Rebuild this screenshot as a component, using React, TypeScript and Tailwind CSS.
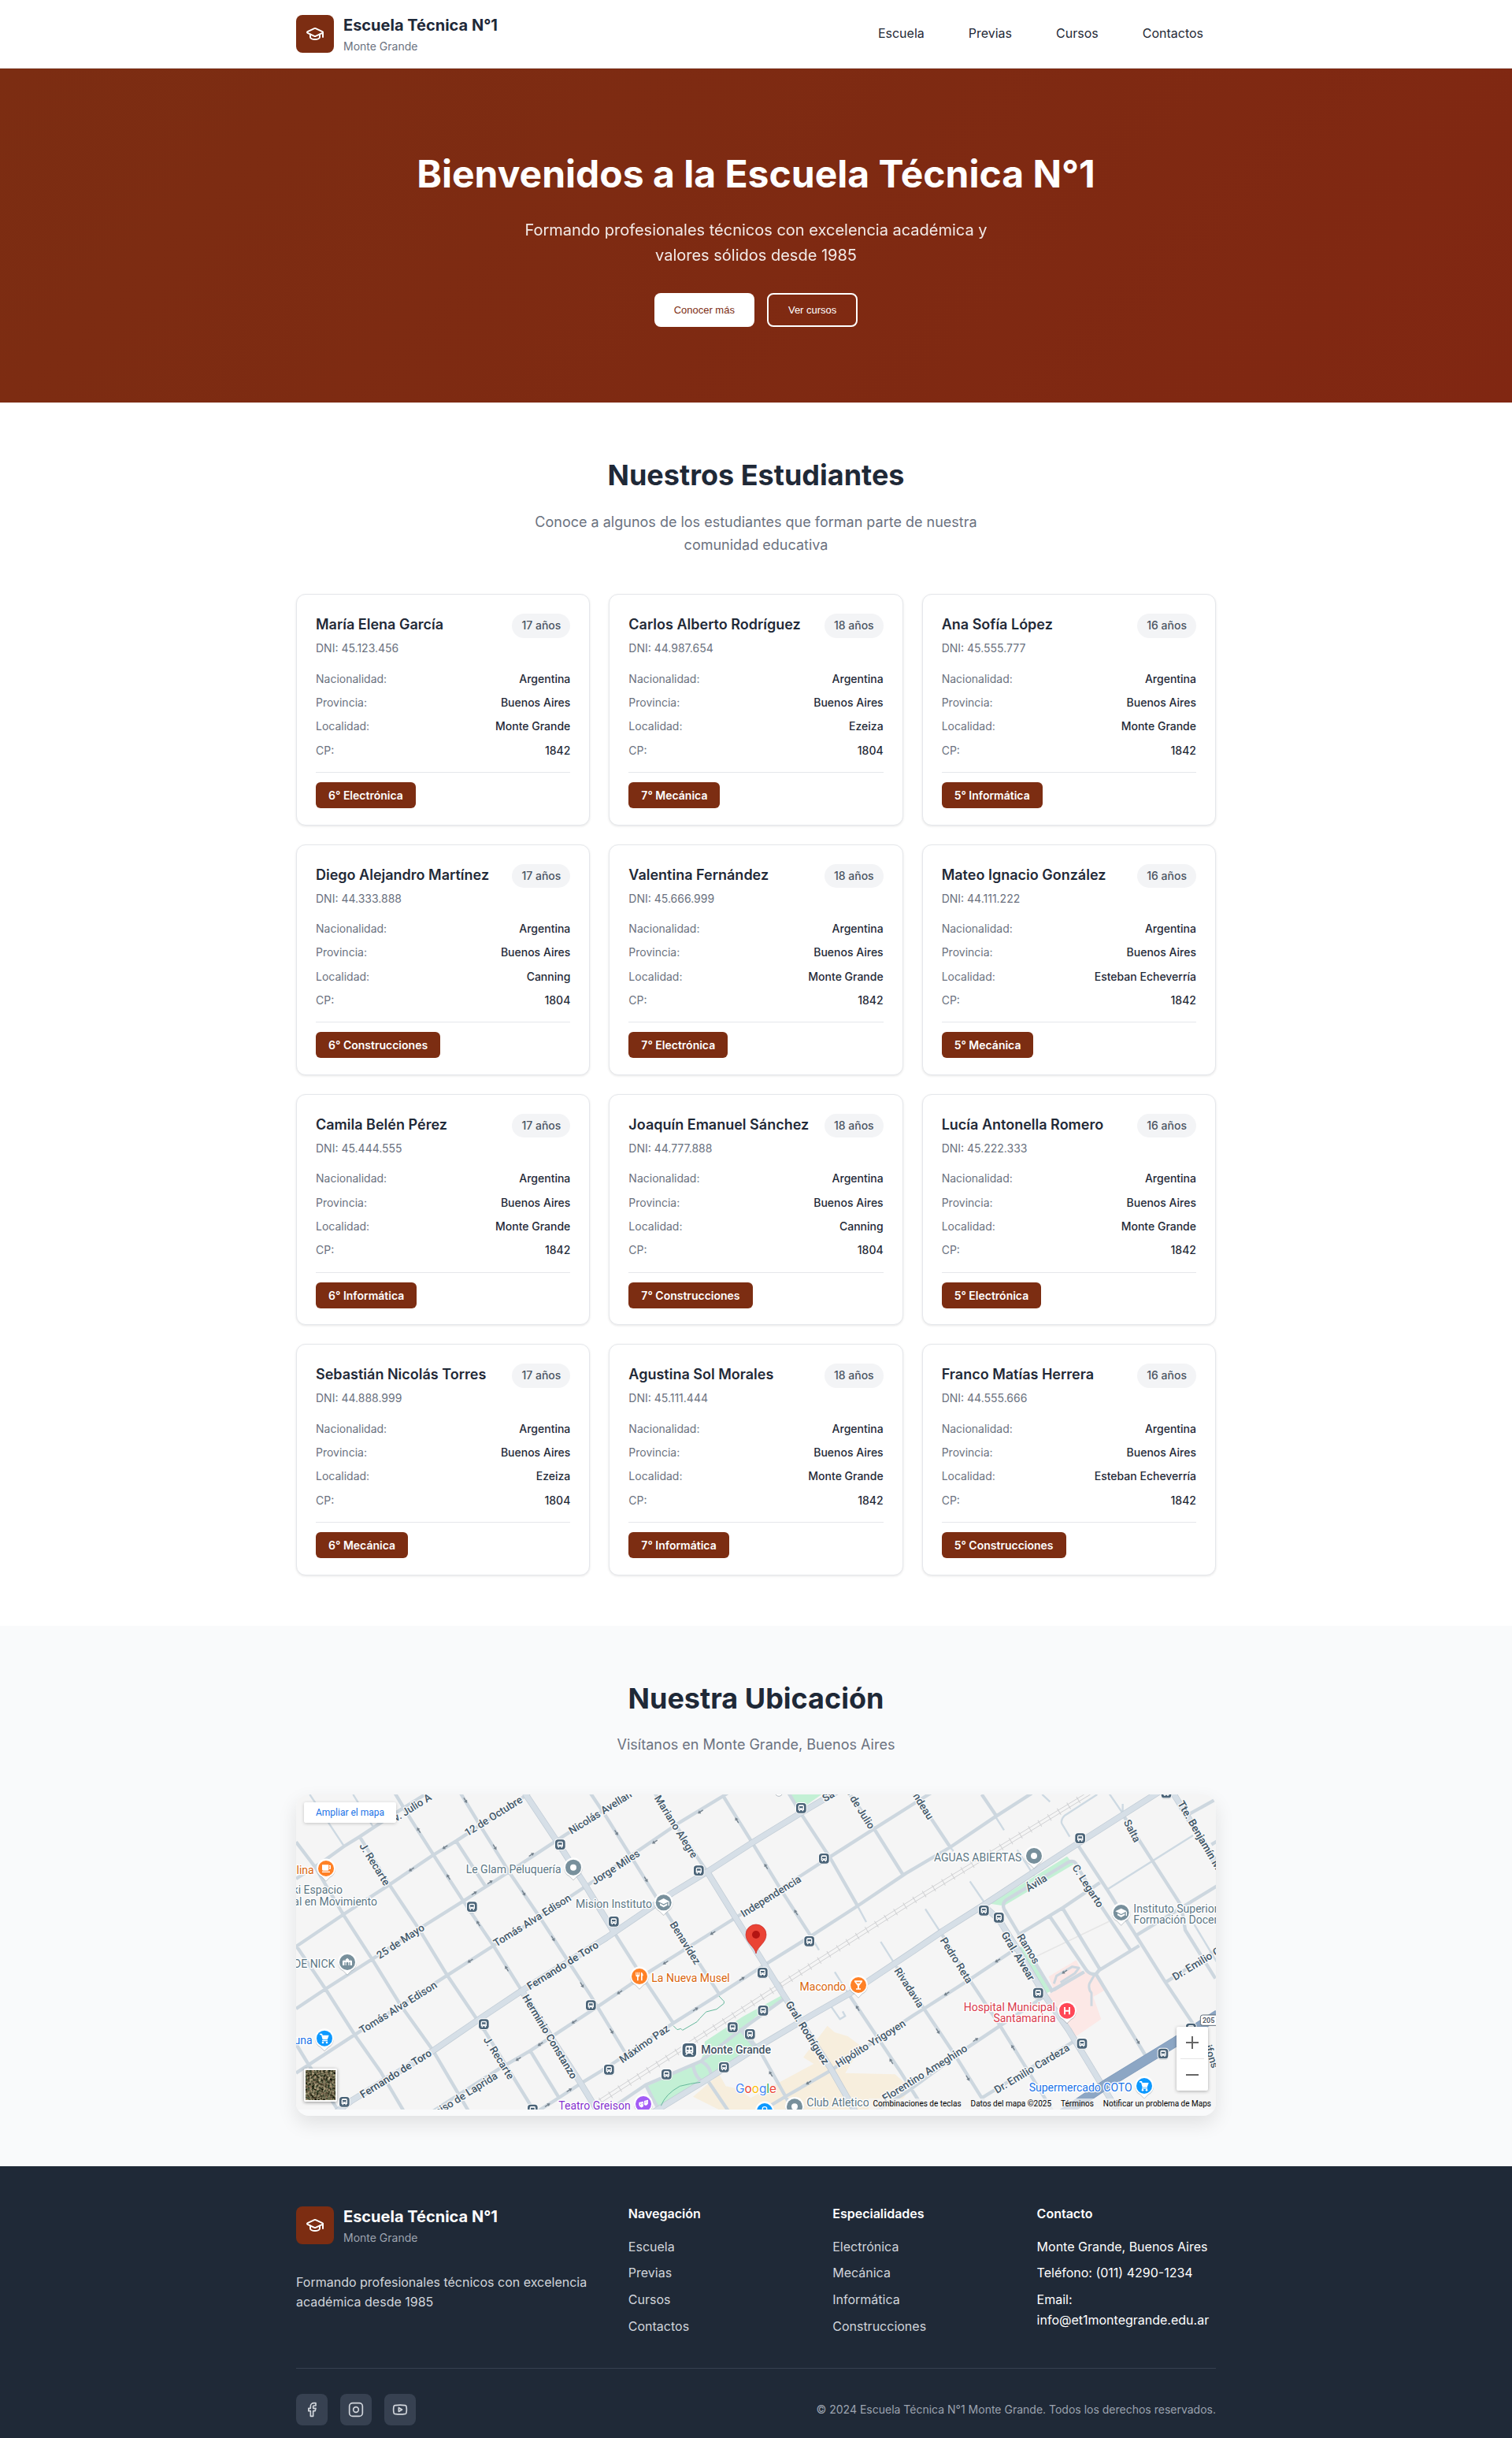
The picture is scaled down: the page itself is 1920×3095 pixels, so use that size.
import React from "react";
import { Facebook, GraduationCap, Youtube } from "lucide-react";

const NAV = ["Escuela", "Previas", "Cursos", "Contactos"];
const SPECIALTIES = ["Electrónica", "Mecánica", "Informática", "Construcciones"];

type Student = {
  name: string;
  dni: string;
  age: number;
  town: string;
  zip: string;
  course: string;
};

const STUDENTS: Student[] = [
  { name: "María Elena García", dni: "45.123.456", age: 17, town: "Monte Grande", zip: "1842", course: "6° Electrónica" },
  { name: "Carlos Alberto Rodríguez", dni: "44.987.654", age: 18, town: "Ezeiza", zip: "1804", course: "7° Mecánica" },
  { name: "Ana Sofía López", dni: "45.555.777", age: 16, town: "Monte Grande", zip: "1842", course: "5° Informática" },
  { name: "Diego Alejandro Martínez", dni: "44.333.888", age: 17, town: "Canning", zip: "1804", course: "6° Construcciones" },
  { name: "Valentina Fernández", dni: "45.666.999", age: 18, town: "Monte Grande", zip: "1842", course: "7° Electrónica" },
  { name: "Mateo Ignacio González", dni: "44.111.222", age: 16, town: "Esteban Echeverría", zip: "1842", course: "5° Mecánica" },
  { name: "Camila Belén Pérez", dni: "45.444.555", age: 17, town: "Monte Grande", zip: "1842", course: "6° Informática" },
  { name: "Joaquín Emanuel Sánchez", dni: "44.777.888", age: 18, town: "Canning", zip: "1804", course: "7° Construcciones" },
  { name: "Lucía Antonella Romero", dni: "45.222.333", age: 16, town: "Monte Grande", zip: "1842", course: "5° Electrónica" },
  { name: "Sebastián Nicolás Torres", dni: "44.888.999", age: 17, town: "Ezeiza", zip: "1804", course: "6° Mecánica" },
  { name: "Agustina Sol Morales", dni: "45.111.444", age: 18, town: "Monte Grande", zip: "1842", course: "7° Informática" },
  { name: "Franco Matías Herrera", dni: "44.555.666", age: 16, town: "Esteban Echeverría", zip: "1842", course: "5° Construcciones" },
];

function Brand({ dark = false }: { dark?: boolean }) {
  return (
    <div className="flex items-center gap-3">
      <div className="flex size-12 shrink-0 items-center justify-center rounded-lg bg-[#7c2d12] text-white">
        <GraduationCap size={24} />
      </div>
      <div>
        <p className={dark ? "text-[20px] font-bold text-white" : "text-[20px] font-bold text-gray-800"}>
          Escuela Técnica N°1
        </p>
        <p className={dark ? "text-[14px] text-[#9ca3af]" : "text-[14px] text-[#6b7280]"}>Monte Grande</p>
      </div>
    </div>
  );
}

function StudentCard({ s }: { s: Student }) {
  const rows = [
    ["Nacionalidad:", "Argentina"],
    ["Provincia:", "Buenos Aires"],
    ["Localidad:", s.town],
    ["CP:", s.zip],
  ];
  return (
    <article className="rounded-xl border border-[#e5e7eb] bg-white p-6 shadow-[0_1px_3px_rgba(0,0,0,0.1)]">
      <div className="mb-4 flex items-start justify-between">
        <div>
          <h3 className="mb-1 text-[18px] font-semibold text-[#1f2937]">{s.name}</h3>
          <p className="text-[14px] text-[#6b7280]">DNI: {s.dni}</p>
        </div>
        <span className="shrink-0 rounded-full bg-[#f3f4f6] px-3 py-1 text-[14px] font-medium text-[#4b5563]">
          {s.age} años
        </span>
      </div>
      <dl className="mb-4 flex flex-col gap-2 text-[14px]">
        {rows.map(([k, v]) => (
          <div key={k} className="flex justify-between">
            <dt className="text-[#6b7280]">{k}</dt>
            <dd className="font-medium text-[#1f2937]">{v}</dd>
          </div>
        ))}
      </dl>
      <div className="border-t border-[#e5e7eb] pt-4">
        <span className="rounded-md bg-[#7c2d12] px-4 py-2 text-[14px] font-semibold text-white">{s.course}</span>
      </div>
    </article>
  );
}

/* ---------- Map drawing: three drawing units per screen pixel ---------- */

const MINOR = [
  "M18 345 120 280 200 222 260 185 420 80 540 5",
  "M18 603 200 480 370 370 540 255 630 200 890 30 930 5",
  "M18 840 130 765 310 650 480 540 655 430 835 315 1010 200 1180 90 1330 -8",
  "M18 1085 240 940 420 825 595 712 770 600 945 490 1120 375 1290 260 1480 130 1645 30 1690 0",
  "M540 1230 790 1070 910 1000 1170 830 1370 695 1690 495 2055 260 2220 155 2370 60 2450 10",
  "M900 1255 1010 1185 1110 1120 1200 1065 1455 895 1630 785 1800 675 1985 560 2155 450 2340 325 2510 225 2680 110 2820 20",
  "M1230 1212 1350 1130 1560 1040 1700 930 1880 800",
  "M1790 1230 1890 1170 2055 1075 2370 865 2410 840 2590 725 2770 605",
  "M2775 555 2940 455 3080 360",
  "M2180 1260 2340 1160 2580 985 2700 905 2880 785",
  "M2890 775 3020 700M3075 695 3230 600M3220 560 3530 370",
  "M2630 1180 2980 965M3330 740 3530 612M3400 110 3530 38M3505 215 3530 200",
  "M18 205 90 300 200 485 310 655 415 825 540 1000 675 1230",
  "M18 600 130 765 245 945 340 1080 428 1230",
  "M18 975 70 1060 180 1230",
  "M260 185 375 370 485 535 595 715 710 885 740 930 925 1230",
  "M395 20 440 95 545 260 655 430 770 600 880 775",
  "M645 20 730 160 830 320 945 490 1055 660 1140 790 1270 1005",
  "M630 205 740 375M910 1000 1020 1180",
  "M1230 550 1325 700 1455 895",
  "M1140 20 1200 110 1390 415 1510 600 1630 785",
  "M1385 20 1470 150 1585 320",
  "M1645 30 1760 215 1870 395 1980 565",
  "M1895 20 1940 95 2055 270 2155 445",
  "M2125 20 2220 155 2330 330M2370 24 2440 120 2510 225M2630 24 2685 105",
  "M2305 680 2410 840 2530 1020 2630 1180 2660 1230",
  "M2120 780 2220 930 2320 1080 2405 1215",
  "M2480 560 2590 740 2700 905 2870 1180 2900 1230",
  "M2780 570 2715 460Q2705 435 2730 422L2960 282Q2985 270 2995 300L3085 450 3195 615",
  "M2770 560 2900 775",
  "M2995 215 3110 390 3220 565 3330 740 3440 905",
  "M2890 490 3030 695Q3045 712 3065 708L3255 1020M2940 460 3080 690 3065 708",
  "M3170 105 3250 230 3385 440Q3400 490 3405 540L3520 725",
  "M1720 920 1790 1010 1880 1170 1912 1230M1590 1120 1665 1230",
];

const THIN = [
  "M70 24 200 220M235 24 310 145",
  "M1980 565 2010 617M2155 445 2190 510M2245 585 2305 680M2070 700 2120 780",
  "M2055 830 2090 880 2110 868 2100 850M2415 460 2480 560M2585 355 2650 450M2680 105 2715 160M2860 24 2890 52M2510 225 2522 240M2765 235 2830 335",
  "M3110 385 3435 180M3440 520 3530 670M3115 20 3170 100M2965 185 2935 135Q2930 120 2945 105L3070 24M3167 60V100",
];

const MAJOR = [
  "M170 1235 230 1190 540 1000 730 870 880 770 1200 570 1450 400 1590 315 1760 205 1940 95 2050 30 2100 0",
  "M880 775 990 950 1100 1120 1170 1235",
  "M890 20 1010 200 1120 370 1230 550",
  "M1585 320 1690 490 1870 780 2050 1060 2150 1235",
  "M1370 1240 1590 1105 1770 990 1990 860 2130 780 2370 620 2480 545 2630 450 2820 325 2990 215 3170 100 3320 5",
  "M2645 455 2695 500 2770 620 2870 790 2960 920 3130 1200 3145 1230",
  "M3360 20 3440 150 3530 300",
];

const PALE = [
  "M1350 1130 1375 1180 1400 1225M1530 1055Q1540 1110 1575 1120M1560 1040Q1600 1060 1600 1105M1715 925 1765 985",
];

const ARROWS: [number, number, number][] = [
  [663, 47, 58], [485, 160, -122], [775, 225, 58], [585, 225, 147], [457, 310, 147], [598, 338, -122], [915, 253, -33],
  [757, 358, -33], [697, 400, -33], [885, 400, 58], [712, 515, -122], [997, 573, 58], [681, 658, 147], [820, 687, -122],
  [1107, 750, 58], [1077, 890, 147], [948, 975, 147], [864, 1032, 147], [1059, 1150, -33], [976, 1207, -33],
  [1238, 170, 58], [1558, 90, 147], [1384, 205, 147], [1351, 348, 58], [1697, 122, -122], [1808, 298, -122],
  [1605, 552, 147], [1425, 665, 147], [1922, 473, -122], [1250, 778, 147], [1717, 726, -33], [1540, 842, -33],
  [1220, 926, 58], [2157, 838, -122], [2285, 1040, -122], [1826, 1088, -122], [1970, 1122, 147], [2690, 657, 147],
  [2496, 783, 147], [2463, 926, 58], [2607, 958, -33], [2749, 988, -122], [2577, 1105, 58], [3225, 965, 58], [2945, 700, 147],
];

const STOPS: [number, number][] = [
  [1024, 215], [688, 452], [1141, 827], [733, 899], [202, 1195], [919, 1224], [1552, 314], [1942, 76], [2029, 268],
  [1973, 583], [1228, 508], [1795, 703], [1797, 847], [1681, 911], [1747, 937], [1648, 1063], [1429, 1090], [1210, 1072],
  [3333, 18], [3005, 191], [2638, 466], [2695, 493], [2845, 780], [3012, 973], [3321, 1011], [3427, 915],
];

type Label = { t: string; x: number; y: number; a: number; anchor?: "start" | "end"; bold?: boolean };

const STREETS: Label[] = [
  { t: "v. Julio A", x: 530, y: 31, a: -32, anchor: "end" },
  { t: "12 de Octubre", x: 770, y: 107, a: -32 },
  { t: "J. Recarte", x: 317, y: 290, a: 58 },
  { t: "25 de Mayo", x: 416, y: 584, a: -33 },
  { t: "Tomás Alva Edison", x: 918, y: 504, a: -32 },
  { t: "Tomás Alva Edison", x: 407, y: 836, a: -32 },
  { t: "Fernando de Toro", x: 1034, y: 676, a: -32, bold: true },
  { t: "Fernando de Toro", x: 398, y: 1088, a: -32, bold: true },
  { t: "Herminio Constanzo", x: 984, y: 947, a: 59, bold: true },
  { t: "J. Recarte", x: 790, y: 1028, a: 58 },
  { t: "ciso de Laprida", x: 782, y: 1092, a: -32, anchor: "end" },
  { t: "Nicolás Avellan", x: 1060, y: 166, a: -32, anchor: "start" },
  { t: "Jorge Miles", x: 1235, y: 302, a: -33 },
  { t: "Mariano Alegre", x: 1465, y: 147, a: 58 },
  { t: "Independencia", x: 1827, y: 412, a: -32 },
  { t: "Benavídez", x: 1500, y: 590, a: 58 },
  { t: "Máximo Paz", x: 1345, y: 974, a: -35 },
  { t: "Gral. Rodríguez", x: 1965, y: 932, a: 58, bold: true },
  { t: "Rivadavia", x: 2353, y: 760, a: 57 },
  { t: "Hipólito Yrigoyen", x: 2207, y: 973, a: -32 },
  { t: "Florentino Ameghino", x: 2413, y: 1086, a: -32 },
  { t: "Sa", x: 2026, y: 42, a: -30, anchor: "start", bold: true },
  { t: "o de Julio", x: 2212, y: 152, a: 58, anchor: "end" },
  { t: "ndeau", x: 2436, y: 116, a: 58, anchor: "end" },
  { t: "Salta", x: 3202, y: 163, a: 62 },
  { t: "Tte. Benjamín M", x: 3386, y: 52, a: 60, anchor: "start", bold: true },
  { t: "Ávila", x: 2838, y: 362, a: -32 },
  { t: "C. Legarto", x: 3034, y: 373, a: 57 },
  { t: "Pedro Reta", x: 2533, y: 656, a: 58 },
  { t: "Ramos", x: 2807, y: 612, a: 58 },
  { t: "Gral. Alvear", x: 2768, y: 640, a: 59, bold: true },
  { t: "Dr. Emilio Cardeza", x: 2821, y: 1069, a: -31 },
  { t: "Dr. Emilio C", x: 3360, y: 722, a: -31, anchor: "start" },
  { t: "ifons", x: 3505, y: 1022, a: 72 },
];

type Poi = { t: string; x: number; y: number; c: string; anchor?: "start" | "end" };
const SLATE = "#5c7785";
const ORANGE = "#d9660d";

const POIS: Poi[] = [
  { t: "lina", x: 86, y: 313, c: ORANGE, anchor: "end" },
  { t: "ki Espacio", x: 195, y: 388, c: SLATE, anchor: "end" },
  { t: "al en Movimiento", x: 327, y: 431, c: SLATE, anchor: "end" },
  { t: "Le Glam Peluquería", x: 1028, y: 310, c: SLATE, anchor: "end" },
  { t: "Mision Instituto", x: 1374, y: 442, c: SLATE, anchor: "end" },
  { t: "DE NICK", x: 166, y: 670, c: SLATE, anchor: "end" },
  { t: "una", x: 80, y: 961, c: "#1a73e8", anchor: "end" },
  { t: "Teatro Greison", x: 1018, y: 1210, c: "#8430ce" },
  { t: "La Nueva Musel", x: 1372, y: 724, c: ORANGE },
  { t: "Macondo", x: 2113, y: 757, c: ORANGE, anchor: "end" },
  { t: "Club Atletico", x: 1963, y: 1198, c: SLATE },
  { t: "AGUAS ABIERTAS", x: 2782, y: 265, c: SLATE, anchor: "end" },
  { t: "Instituto Superior", x: 3208, y: 460, c: SLATE },
  { t: "Formación Docen", x: 3208, y: 502, c: SLATE },
  { t: "Hospital Municipal", x: 2910, y: 835, c: "#d93a4c", anchor: "end" },
  { t: "Santamarina", x: 2912, y: 877, c: "#d93a4c", anchor: "end" },
  { t: "Supermercado COTO", x: 3203, y: 1141, c: "#1a73e8", anchor: "end" },
];

function Pin({ x, y, fill, children }: { x: number; y: number; fill: string; children?: React.ReactNode }) {
  return (
    <g transform={`translate(${x} ${y})`}>
      <path d="M0 47 -16 31A36 36 0 1 1 16 31Z" fill="#5f6b73" opacity="0.35" transform="translate(0 3)" />
      <path d="M0 47 -16 31A36 36 0 1 1 16 31Z" fill="#fff" />
      <circle r="30" fill={fill} />
      {children}
    </g>
  );
}

const Cart = () => (
  <g fill="#fff">
    <path d="M-18-18H-9L-7-12H17L11 5H-7L-12-13H-18Z" />
    <path d="M-9 7H12V11H-9Z" />
    <circle cx="-6" cy="16" r="4" />
    <circle cx="9" cy="16" r="4" />
  </g>
);

const Cap = () => (
  <g fill="#fff">
    <path d="M0-16 22-5 0 6-22-5Z" />
    <path d="M-14 3 0 10 14 3V10L0 18-14 10ZM18-3H22V12H18Z" />
  </g>
);

function BusStop({ x, y }: { x: number; y: number }) {
  return (
    <g transform={`translate(${x} ${y})`}>
      <rect x="-21" y="-19" width="42" height="42" rx="13" fill="#5f6b73" opacity="0.4" />
      <rect x="-22" y="-22" width="44" height="44" rx="13" fill="#fff" />
      <rect x="-19" y="-19" width="38" height="38" rx="11" fill="#4b6478" />
      <path d="M-11-6Q-11-12-6-12H6Q11-12 11-6V8H8V12H4V8H-4V12H-8V8H-11Z" fill="#fff" />
      <path d="M-7-7H7V0H-7ZM-7 3H-4V5H-7ZM4 3H7V5H4Z" fill="#4b6478" />
    </g>
  );
}

function MapDrawing() {
  return (
    <svg
      viewBox="18 24 3504 1200"
      preserveAspectRatio="xMidYMid slice"
      className="block size-full"
      role="img"
      aria-label="Mapa de Monte Grande"
      fontFamily="Roboto, sans-serif"
    >
      <rect x="-3000" y="-1000" width="9000" height="4000" fill="#f5f5f5" />
      <path d="M1950 1025 2042 905 2070 930 2120 945 2180 990 2150 1020 2110 1085 2300 1090 2345 1130 2340 1170 2290 1230H1640L1530 1175 1630 1090 1655 1135 1700 1145 1750 1180 1860 1120 1990 1050Z" fill="#f7eedd" />
      <path d="M1355 1135 1530 1055 1560 1035 1570 1010 1575 965 1720 870 1870 788 1875 800 1770 870 1730 905 1765 970 1795 985 1570 1130 1400 1225Z" fill="#c3f0d5" />
      <path d="M1890 24H2020L1940 80Z" fill="#c3f0d5" />
      <path d="M2662 440 2955 260 2980 290 2715 448ZM2770 610 2790 600 2900 770 2878 780Z" fill="#c3f0d5" />
      <path d="M2885 718 2990 655 3010 695 3065 710 3097 770 3055 795 3085 880 2985 948 2882 790 2905 770Z" fill="#fce8e6" />
      <path d="M2840 640 3115 508" stroke="#e6e6e6" strokeWidth="5" fill="none" />

      <g fill="none" stroke="#d0d1d3" strokeWidth="3">
        <path d="M1170 1204 1870 754 2370 436 3044 24M1170 1188 1870 738 2370 420 3020 24" />
        <path d="M1178 1192 1870 746 2370 428 3032 24" strokeWidth="28" strokeDasharray="3 40" />
      </g>

      <g fill="none" strokeLinejoin="round">
        <path d={THIN.join("")} stroke="#cdd9e2" strokeWidth="7" />
        <path d="M2905 745 2915 715 2975 680 3000 685 2985 705 2930 740M2905 770 3020 700M3060 710 3040 745Q3035 765 3048 780V830" stroke="#cdd7df" strokeWidth="9" />
        <path d={PALE.join("")} stroke="#ced8e1" strokeWidth="13" />
        <path d={MINOR.join("")} stroke="#cdd7df" strokeWidth="13" />
        <path d={MAJOR.join("")} stroke="#bfcad4" strokeWidth="24" />
        <path d={MAJOR.join("")} stroke="#d6dfe7" strokeWidth="20" />
        <path d="M2930 1245 3100 1130 3370 965 3530 862" stroke="#7d98b8" strokeWidth="38" />
        <path d="M2930 1245 3100 1130 3370 965 3530 862" stroke="#8ca6c4" strokeWidth="34" />
        <path d="M1629 792 1648 812 1648 820 1620 842 1580 852 1555 878 1545 890 1490 922 1484 916 1470 920 1455 905M1408 1210Q1425 1165 1480 1135 1520 1125 1558 1120" stroke="#65b89c" strokeWidth="3" />
      </g>

      <g fill="#75828d">
        {ARROWS.map(([x, y, a], i) => (
          <path key={i} d="M-12-2H1V-7L12 0 1 7V2H-12Z" transform={`translate(${x} ${y}) rotate(${a})`} />
        ))}
      </g>

      {STOPS.map(([x, y], i) => (
        <BusStop key={i} x={x} y={y} />
      ))}

      <g fontSize="40" fill="#435869" stroke="#f8f9fa" strokeWidth="8" strokeLinejoin="round" paintOrder="stroke">
        {STREETS.map((l, i) => (
          <text
            key={i}
            transform={`translate(${l.x} ${l.y}) rotate(${l.a})`}
            y="13"
            textAnchor={l.anchor ?? "middle"}
            fontWeight={l.bold ? 600 : 500}
          >
            {l.t}
          </text>
        ))}
      </g>

      <g fontSize="42" stroke="#fff" strokeWidth="8" strokeLinejoin="round" paintOrder="stroke">
        {POIS.map((p) => (
          <text key={p.t} x={p.x} y={p.y + 15} fill={p.c} textAnchor={p.anchor ?? "start"}>
            {p.t}
          </text>
        ))}
        <text x="1561" y="1012" fill="#3f5364" fontWeight="500">
          Monte Grande
        </text>
      </g>

      <g transform="translate(1516 998)">
        <rect x="-31" y="-31" width="62" height="62" rx="18" fill="#fff" />
        <rect x="-26" y="-26" width="52" height="52" rx="14" fill="#4b6478" />
        <path d="M-15-10Q-15-17-8-17H8Q15-17 15-10V8Q15 12 11 12L16 18H10L6 13H-6L-10 18H-16L-11 12Q-15 12-15 8Z" fill="#fff" />
        <path d="M-10-10H-2V-1H-10ZM2-10H10V-1H2ZM-9 4H-5V8H-9ZM5 4H9V8H5Z" fill="#4b6478" />
      </g>

      <Pin x={132} y={306} fill="#ff8126">
        <path d="M-15-14H10V5Q10 8 6 8H-11Q-15 8-15 4ZM12-12H18V2H12V-2H14V-8H12ZM-15 11H15V15H-15Z" fill="#fff" />
      </Pin>
      <Pin x={1326} y={717} fill="#ff8126">
        <path d="M-14-16H-11V-6H-8V-16H-5V-6H-2V-16H1V-4Q1 1-4 2V16H-9V2Q-14 1-14 -4ZM6-16Q14-14 14-2H11V16H6Z" fill="#fff" />
      </Pin>
      <Pin x={2160} y={750} fill="#ff8126">
        <path d="M-15-17H15V-13L3 3V13H9V17H-9V13H-3V3L-15-13ZM-8-11-5-7H5L8-11Z" fill="#fff" fillRule="evenodd" />
      </Pin>
      <Pin x={1074} y={302} fill="#78909c"><circle r="12" fill="#fff" /></Pin>
      <Pin x={2829} y={258} fill="#78909c"><circle r="12" fill="#fff" /></Pin>
      <Pin x={1917} y={1213} fill="#78909c"><circle r="12" fill="#fff" /></Pin>
      <Pin x={1418} y={436} fill="#78909c"><Cap /></Pin>
      <Pin x={3161} y={474} fill="#78909c"><Cap /></Pin>
      <Pin x={213} y={663} fill="#78909c">
        <path d="M-18 12V-6H-13V-10H-11V-6H-7V-10L0-16 7-10V-6H11V-10H13V-6H18V12H11V0H7V12H4V2Q0-4-4 2V12H-7V0H-11V12Z" fill="#fff" />
      </Pin>
      <Pin x={126} y={953} fill="#0d99ff"><Cart /></Pin>
      <Pin x={3249} y={1134} fill="#0d99ff"><Cart /></Pin>
      <Pin x={1803} y={1230} fill="#0d99ff">
        <path d="M-8-4V-10Q-8-16 0-16T8-10V-4" fill="none" stroke="#fff" strokeWidth="4" />
      </Pin>
      <Pin x={1341} y={1203} fill="#a35cf5">
        <path d="M-17-6 0-10V8Q-4 14-9 13T-17 4ZM3-12 18-16V-2Q16 5 9 6L3 3Z" fill="#fff" />
        <path d="M-12-1H-9V2H-12ZM-6-2H-3V1H-6ZM7-8H9V-5H7ZM13-9H15V-6H13Z" fill="#a35cf5" />
      </Pin>
      <Pin x={2955} y={848} fill="#ff4757">
        <path d="M-12-14H-6V-3H6V-14H12V14H6V3H-6V14H-12Z" fill="#fff" />
      </Pin>
      <circle cx="1857" cy="17" r="14" fill="#fff" stroke="#b5bcc2" strokeWidth="3" />

      <g transform="translate(3494 884)">
        <rect x="-31" y="-20" width="70" height="40" rx="9" fill="#fff" stroke="#5f6b78" strokeWidth="3" />
        <text x="0" y="10" fontSize="27" fontWeight="500" textAnchor="middle" fill="#3f4b57">205</text>
      </g>

      <path d="M1770 630C1766 604 1731 590 1731 558A39 39 0 0 1 1809 558C1809 590 1774 604 1770 630Z" fill="#ea4335" stroke="#c5221f" strokeWidth="2" />
      <circle cx="1770" cy="558" r="15" fill="#b31412" />

      <text x="1770" y="1160" textAnchor="middle" fontSize="46" fontWeight="400" fontFamily="Inter, sans-serif" stroke="#fff" strokeWidth="5" paintOrder="stroke">
        <tspan fill="#4285f4">G</tspan>
        <tspan fill="#ea4335">o</tspan>
        <tspan fill="#fbbc04">o</tspan>
        <tspan fill="#4285f4">g</tspan>
        <tspan fill="#34a853">l</tspan>
        <tspan fill="#ea4335">e</tspan>
      </text>
    </svg>
  );
}

function MapPanel() {
  return (
    <div className="overflow-hidden rounded-2xl pb-2 font-[Roboto,sans-serif] shadow-[0_10px_25px_rgba(0,0,0,0.1)]">
      <div className="relative h-[400px] overflow-hidden">
        <MapDrawing />
        <a
          href="#mapa"
          className="absolute top-[10px] left-[10px] rounded-xs bg-white px-[15px] py-[5px] text-[12px] leading-4 text-[#1a73e8] shadow-[0_1px_4px_rgba(0,0,0,0.2)]"
        >
          Ampliar el mapa
        </a>
        <button
          type="button"
          aria-label="Mostrar imágenes satelitales"
          className="absolute bottom-[10px] left-[10px] size-[42px] overflow-hidden rounded-xs border-2 border-white shadow-[0_1px_4px_rgba(0,0,0,0.4)]"
        >
          <svg className="block size-full" viewBox="0 0 38 38" aria-hidden="true">
            <filter id="terrain" x="0" y="0" width="100%" height="100%" colorInterpolationFilters="sRGB">
              <feTurbulence type="fractalNoise" baseFrequency="0.35" numOctaves="3" seed="4" />
              <feColorMatrix values="1.1 0.5 0 0 -0.4 0.9 0.6 0 0 -0.37 0.8 0.5 0 0 -0.37 0 0 0 0 1" />
            </filter>
            <rect width="38" height="38" filter="url(#terrain)" />
          </svg>
        </button>
        <div className="absolute right-[10px] bottom-6 flex w-10 flex-col items-center rounded-xs bg-white text-[#666] shadow-[0_1px_4px_rgba(0,0,0,0.3)]">
          <button type="button" aria-label="Ampliar" className="flex size-10 items-center justify-center">
            <svg viewBox="0 0 16 16" className="size-4" aria-hidden="true">
              <path d="M0 7H7V0H9V7H16V9H9V16H7V9H0Z" fill="currentColor" />
            </svg>
          </button>
          <div className="h-px w-[30px] bg-[#e6e6e6]" />
          <button type="button" aria-label="Reducir" className="flex size-10 items-center justify-center">
            <svg viewBox="0 0 16 16" className="size-4" aria-hidden="true">
              <path d="M0 7H16V9H0Z" fill="currentColor" />
            </svg>
          </button>
        </div>
        <div className="absolute right-0 bottom-0 flex gap-3 bg-[#f5f5f5]/70 px-[6px] text-[10px] leading-[14px] text-black">
          <button type="button">Combinaciones de teclas</button>
          <span>Datos del mapa ©2025</span>
          <a href="#terminos">Términos</a>
          <a href="#notificar">Notificar un problema de Maps</a>
        </div>
      </div>
    </div>
  );
}

function SocialLink({ label, children }: { label: string; children: React.ReactNode }) {
  return (
    <a
      href="#redes"
      aria-label={label}
      className="flex size-10 items-center justify-center rounded-lg bg-[#374151] text-[#d1d5db]"
    >
      {children}
    </a>
  );
}

function FooterLinks({ title, items }: { title: string; items: string[] }) {
  return (
    <div>
      <h4 className="mb-4 font-semibold text-white">{title}</h4>
      <ul>
        {items.map((i) => (
          <li key={i} className="mb-2">
            <a href="#" className="text-[#d1d5db]">
              {i}
            </a>
          </li>
        ))}
      </ul>
    </div>
  );
}

export default function App() {
  return (
    <div className="bg-white font-[Inter,sans-serif] text-[16px] leading-[1.6] text-[#1f2937]">
      <header className="border-b border-[#e5e7eb] bg-white">
        <div className="mx-auto flex max-w-[1200px] flex-wrap items-center justify-between px-4 py-4">
          <Brand />
          <nav className="flex flex-wrap gap-6">
            {NAV.map((n) => (
              <a key={n} href="#" className="px-4 py-2">
                {n}
              </a>
            ))}
          </nav>
        </div>
      </header>

      <main>
        <section className="bg-linear-135 from-[#7c2d12] to-[#812712] px-4 py-24 text-center text-white">
          <h1 className="mb-4 text-[48px] font-bold">Bienvenidos a la Escuela Técnica N°1</h1>
          <p className="mx-auto mb-8 max-w-[600px] text-[20px] opacity-90">
            Formando profesionales técnicos con excelencia académica y valores sólidos desde 1985
          </p>
          <div className="flex flex-wrap justify-center gap-4 font-['Liberation_Sans',Arial,sans-serif] text-[13px] leading-[15px] font-medium">
            <button type="button" className="rounded-lg bg-white px-[25px] py-3 text-[#7c2d12]">
              Conocer más
            </button>
            <button type="button" className="rounded-lg border-2 border-white px-[25px] py-3 text-white">
              Ver cursos
            </button>
          </div>
        </section>

        <section className="mx-auto max-w-[1200px] px-4 py-16">
          <div className="mb-12 text-center">
            <h2 className="mb-4 text-[36px] font-bold">Nuestros Estudiantes</h2>
            <p className="mx-auto max-w-[600px] text-[18px] text-[#6b7280]">
              Conoce a algunos de los estudiantes que forman parte de nuestra comunidad educativa
            </p>
          </div>
          <div className="grid grid-cols-1 gap-6 md:grid-cols-2 lg:grid-cols-3">
            {STUDENTS.map((s) => (
              <StudentCard key={s.dni} s={s} />
            ))}
          </div>
        </section>

        <section className="bg-[#f9fafb] py-16">
          <div className="mx-auto max-w-[1200px] px-4">
            <div className="mb-12 text-center">
              <h2 className="mb-4 text-[36px] font-bold">Nuestra Ubicación</h2>
              <p className="text-[18px] text-[#6b7280]">Visítanos en Monte Grande, Buenos Aires</p>
            </div>
            <MapPanel />
          </div>
        </section>
      </main>

      <footer className="bg-[#1f2937] text-white">
        <div className="mx-auto max-w-[1200px] px-4 pt-12 pb-4">
          <div className="mb-8 grid grid-cols-1 gap-8 md:grid-cols-[12fr_7fr_7fr_7fr]">
            <div>
              <Brand dark />
              <p className="mt-8 text-[#d1d5db]">Formando profesionales técnicos con excelencia académica desde 1985</p>
            </div>
            <FooterLinks title="Navegación" items={NAV} />
            <FooterLinks title="Especialidades" items={SPECIALTIES} />
            <div>
              <h4 className="mb-4 font-semibold">Contacto</h4>
              <p className="mb-2">Monte Grande, Buenos Aires</p>
              <p className="mb-2">Teléfono: (011) 4290-1234</p>
              <p className="mb-2">Email: info@et1montegrande.edu.ar</p>
            </div>
          </div>
          <div className="flex flex-wrap items-center justify-between gap-4 border-t border-[#374151] pt-8">
            <div className="flex gap-4">
              <SocialLink label="Facebook">
                <Facebook size={20} />
              </SocialLink>
              <SocialLink label="Instagram">
                <svg viewBox="0 0 24 24" className="size-5" fill="none" stroke="currentColor" strokeWidth="2" aria-hidden="true">
                  <rect x="2" y="2" width="20" height="20" rx="5" />
                  <circle cx="12" cy="12" r="4" />
                </svg>
              </SocialLink>
              <SocialLink label="YouTube">
                <Youtube size={20} />
              </SocialLink>
            </div>
            <p className="text-[14px] text-[#9ca3af]">© 2024 Escuela Técnica N°1 Monte Grande. Todos los derechos reservados.</p>
          </div>
        </div>
      </footer>
    </div>
  );
}
